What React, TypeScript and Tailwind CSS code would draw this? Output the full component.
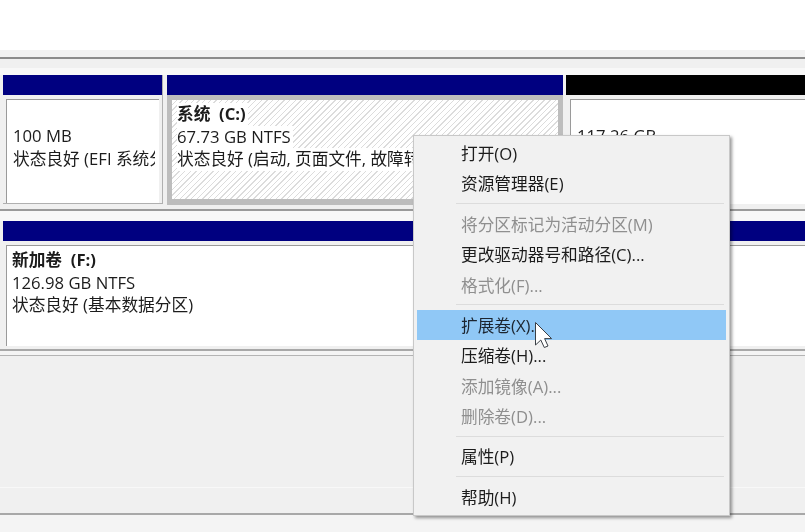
const FONT = "font-['Open_Sans','Noto_Sans_CJK_SC',sans-serif]";

type MenuEntry = { label: string; disabled?: boolean; active?: boolean } | "sep";

const MENU: MenuEntry[] = [
  { label: "打开(O)" },
  { label: "资源管理器(E)" },
  "sep",
  { label: "将分区标记为活动分区(M)", disabled: true },
  { label: "更改驱动器号和路径(C)..." },
  { label: "格式化(F)...", disabled: true },
  "sep",
  { label: "扩展卷(X)...", active: true },
  { label: "压缩卷(H)..." },
  { label: "添加镜像(A)...", disabled: true },
  { label: "删除卷(D)...", disabled: true },
  "sep",
  { label: "属性(P)" },
  "sep",
  { label: "帮助(H)" },
];

function ContextMenu() {
  return (
    <div className="absolute left-[413px] top-[135px] flex h-[381px] w-[317px] flex-col border border-[#c8c8c8] bg-[#f1f1f1] px-[3px] pt-[2px] shadow-[2px_2px_3px_rgba(0,0,0,0.4)]">
      {MENU.map((m, i) =>
        m === "sep" ? (
          <div key={i} className="ml-[39px] mr-[2px] flex h-[10px] shrink-0 items-center">
            <div className="h-px w-full bg-[#dcdcdc]" />
          </div>
        ) : (
          <div
            key={i}
            className={
              "flex h-[30.4px] shrink-0 items-center pl-[44px] pt-[2px] text-[16.7px] " +
              (m.active ? "bg-[#90c8f6] text-[#1c2530]" : m.disabled ? "text-[#8f8f8f]" : "text-[#1c1c1c]")
            }
          >
            {m.label}
          </div>
        )
      )}
    </div>
  );
}

function Cursor() {
  return (
    <svg className="absolute left-[534px] top-[321px]" width="20" height="28" viewBox="0 0 20 28">
      <path
        d="M1.5 1.5 L1.5 24 L6.8 19 L10.3 26.5 L14 25 L10.6 17.6 L17.6 17.6 Z"
        fill="#ffffff"
        stroke="#3a3f45"
        strokeWidth="1"
        strokeLinejoin="round"
      />
    </svg>
  );
}

export default function App() {
  return (
    <div className={"relative flex h-[532px] w-[805px] flex-col overflow-hidden bg-[#f0f0f0] text-[16.7px] leading-[22.5px] text-[#1c1c1c] blur-[0.4px] " + FONT}>
      <div className="h-[50px] shrink-0 bg-white" />
      <div className="h-[7px] shrink-0 bg-[#f2f2f2]" />
      <div className="h-[2px] shrink-0 bg-[#8c8c8c]" />
      <div className="h-[9px] shrink-0 bg-[#f0f0f0]" />
      <div className="h-[7px] shrink-0 bg-[#f8f8f8]" />

      {/* first disk */}
      <div className="flex h-[130px] shrink-0 pl-[3px]">
        <div className="flex h-[129px] w-[160px] flex-col border-r border-b border-[#b0b0b0] bg-[#f0f0f0]">
          <div className="h-[20px] shrink-0 bg-[#000080]" />
          <div className="mt-[4px] ml-[3px] mr-[3px] h-[104px] border-t border-l border-[#9a9a9a] bg-white pl-[6px] pt-[25px]">
            <div>100 MB</div>
            <div className="w-[142px] overflow-hidden whitespace-nowrap">状态良好 (EFI 系统分区)</div>
          </div>
        </div>
        <div className="ml-[4px] flex w-[396px] flex-col">
          <div className="h-[20px] shrink-0 bg-[#000080]" />
          <div className="h-[110px] bg-[#bdbdbd] px-[5px] pt-[5px] pb-[6px]">
            <div className="flex h-full flex-col items-start bg-white bg-[repeating-linear-gradient(135deg,#ffffff_0px,#ffffff_3px,#dcdcdc_3px,#dcdcdc_4px)] pl-[5px] pt-[3px]">
              <div className="bg-white pr-[2px] font-bold">系统&nbsp;&nbsp;(C:)</div>
              <div className="bg-white pr-[2px]">67.73 GB NTFS</div>
              <div className="bg-white pr-[2px] whitespace-nowrap">状态良好 (启动, 页面文件, 故障转储, 基本数据分区)</div>
            </div>
          </div>
        </div>
        <div className="ml-[3px] flex flex-1 flex-col">
          <div className="h-[20px] shrink-0 bg-black" />
          <div className="mt-[4px] ml-[4px] h-[105px] border-t border-l border-[#9a9a9a] bg-white pl-[6px] pt-[25px]">
            <div>117.26 GB</div>
          </div>
        </div>
      </div>

      <div className="mt-[4px] h-[2px] shrink-0 bg-[#9a9a9a]" />
      <div className="h-[10px] shrink-0 bg-[#f8f8f8]" />

      {/* second disk */}
      <div className="flex h-[128px] shrink-0 flex-col pl-[3px]">
        <div className="h-[20px] shrink-0 bg-[#000080]" />
        <div className="mt-[4px] ml-[3px] h-[101px] border-t border-l border-[#9a9a9a] bg-white pl-[5px] pt-[3px]">
          <div className="font-bold">新加卷&nbsp;&nbsp;(F:)</div>
          <div>126.98 GB NTFS</div>
          <div>状态良好 (基本数据分区)</div>
        </div>
      </div>

      <div className="h-[2px] shrink-0 bg-[#a8a8a8]" />
      <div className="h-[4px] shrink-0 bg-[#f4f4f4]" />
      <div className="h-px shrink-0 bg-[#b4b4b4]" />
      <div className="h-[131px] shrink-0 bg-[#f0f0f0]" />
      <div className="h-px shrink-0 bg-[#f8f8f8]" />
      <div className="h-[25px] shrink-0 bg-[#f0f0f0]" />
      <div className="h-[2px] shrink-0 bg-[#a8a8a8]" />
      <div className="flex-1 bg-[#f4f4f4]" />

      <ContextMenu />
      <Cursor />
    </div>
  );
}
